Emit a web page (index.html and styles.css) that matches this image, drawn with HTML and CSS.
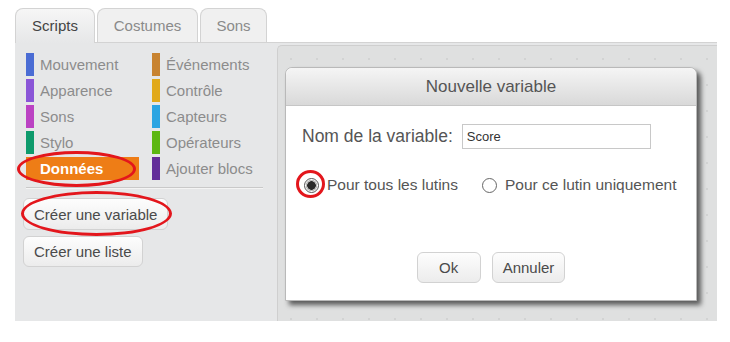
FILE: index.html
```html
<!DOCTYPE html>
<html lang="fr">
<head>
<meta charset="UTF-8">
<title>Nouvelle variable</title>
<link rel="stylesheet" href="styles.css">
</head>
<body>
<div class="editor">
    <div class="tabs">
        <div class="tab active">Scripts</div>
        <div class="tab tab-costumes">Costumes</div>
        <div class="tab tab-sons">Sons</div>
    </div>
    <div class="workspace">
        <div class="palette">
            <div class="categories">
                <div class="cat"><span class="bar motion"></span>Mouvement</div>
                <div class="cat"><span class="bar events"></span>Événements</div>
                <div class="cat"><span class="bar looks"></span>Apparence</div>
                <div class="cat"><span class="bar control"></span>Contrôle</div>
                <div class="cat"><span class="bar sound"></span>Sons</div>
                <div class="cat"><span class="bar sensing"></span>Capteurs</div>
                <div class="cat"><span class="bar pen"></span>Stylo</div>
                <div class="cat"><span class="bar operators"></span>Opérateurs</div>
                <div class="cat selected"><span class="bar data"></span>Données</div>
                <div class="cat"><span class="bar more"></span>Ajouter blocs</div>
            </div>
            <div class="sep"></div>
            <div class="actions">
                <button class="soft-btn">Créer une variable</button>
                <button class="soft-btn">Créer une liste</button>
            </div>
        </div>
        <div class="scripts">
            <div class="dialog">
                <div class="dialog-title">Nouvelle variable</div>
                <div class="dialog-body">
                    <div class="name-row">
                        <label for="varName">Nom de la variable:</label>
                        <input type="text" id="varName" value="Score">
                    </div>
                    <div class="radio-row">
                        <span class="radio-item"><span class="radio checked"></span>Pour tous les lutins</span>
                        <span class="radio-item"><span class="radio"></span>Pour ce lutin uniquement</span>
                    </div>
                    <div class="dialog-buttons">
                        <button class="soft-btn ok">Ok</button>
                        <button class="soft-btn">Annuler</button>
                    </div>
                </div>
            </div>
        </div>
    </div>
    <!-- annotations -->
    <div class="mark mark-data"></div>
    <div class="mark mark-var"></div>
    <div class="mark mark-radio"></div>
</div>
</body>
</html>
```

FILE: styles.css
```css
body {
    margin: 0;
    background: #fff;
    font-family: "Liberation Sans", Arial, sans-serif;
}
.editor {
    position: relative;
    width: 702px;
    margin: 8px 0 0 15px;
}
.tabs {
    display: flex;
    gap: 2px;
    height: 34px;
}
.tab {
    box-sizing: border-box;
    height: 34px;
    padding-top: 8px;
    text-align: center;
    font-size: 15px;
    color: #8a8a8a;
    background: #f0f0f0;
    border: 1px solid #d3d3d3;
    border-bottom: none;
    border-radius: 8px 8px 0 0;
}
.tab.active {
    width: 80px;
    color: #444;
    background: linear-gradient(#f6f6f6, #e6e7e8);
    position: relative;
    z-index: 1;
    height: 35px;
}
.tab-costumes { width: 101px; }
.tab-sons { width: 67px; }
.workspace {
    display: flex;
    height: 279px;
    background: #e6e7e8;
    border-top: 1px solid #d3d3d3;
    box-sizing: border-box;
}
.palette {
    width: 262px;
    padding: 10px 0 0 11px;
    box-sizing: border-box;
}
.categories {
    display: grid;
    grid-template-columns: 126px 114px;
    row-gap: 3px;
}
.cat {
    display: flex;
    align-items: center;
    height: 23px;
    font-size: 15px;
    color: #8c8c8c;
}
.bar {
    width: 8px;
    height: 23px;
    margin-right: 6px;
}
.motion { background: #4a6cd4; }
.looks { background: #8a55d7; }
.sound { background: #bb42c3; }
.pen { background: #0e9a6c; }
.data { background: #ee7d16; }
.events { background: #c88330; }
.control { background: #e1a91a; }
.sensing { background: #2ca5e2; }
.operators { background: #5cb712; }
.more { background: #632d99; }
.cat.selected {
    width: 113px;
    background: #ee7d16;
    color: #fff;
    font-weight: bold;
}
.sep {
    width: 237px;
    height: 1px;
    margin-top: 7px;
    background: #c9c9c9;
    border-bottom: 1px solid #f4f4f4;
}
.actions {
    display: flex;
    flex-direction: column;
    align-items: flex-start;
    gap: 6px;
    margin: 9px 0 0 -3px;
}
.soft-btn {
    height: 32px;
    padding: 0 10px;
    font-family: "Liberation Sans", Arial, sans-serif;
    font-size: 15px;
    color: #4a4a4a;
    background: linear-gradient(#fdfdfd, #ececec);
    border: 1px solid #d2d2d2;
    border-radius: 6px;
}
.actions .soft-btn + .soft-btn { height: 31px; }
.scripts {
    position: relative;
    flex: 1;
    margin-top: 2px;
    border-top: 1px solid #cfcfcf;
    border-left: 1px solid #cfcfcf;
    border-top-left-radius: 5px;
    background-color: #dfe0e0;
    background-image: radial-gradient(circle, #d2d3d3 1px, transparent 1.5px);
    background-size: 26px 26px;
}
.dialog {
    position: absolute;
    left: 7px;
    top: 21px;
    width: 412px;
    height: 234px;
    box-sizing: border-box;
    background: #fff;
    border: 1px solid #b9b9b9;
    border-radius: 7px 7px 0 0;
    box-shadow: 4px 4px 5px rgba(0, 0, 0, 0.6);
}
.dialog-title {
    height: 37px;
    line-height: 37px;
    text-align: center;
    font-size: 17px;
    color: #555;
    background: linear-gradient(#f5f5f5, #d9d9d9);
    border-bottom: 1px solid #c6c6c6;
    border-radius: 7px 7px 0 0;
}
.dialog-body {
    padding: 18px 0 0 16px;
}
.name-row {
    display: flex;
    align-items: center;
    gap: 9px;
}
.name-row label {
    font-size: 17.5px;
    color: #555;
}
.name-row input {
    width: 189px;
    height: 25px;
    box-sizing: border-box;
    padding: 0 4px;
    border: 1px solid #c8c8c8;
    font-family: "Liberation Sans", Arial, sans-serif;
    font-size: 13px;
    color: #333;
}
.radio-row {
    display: flex;
    gap: 22px;
    margin-top: 27px;
    font-size: 15.5px;
    color: #555;
}
.radio-item {
    display: flex;
    align-items: center;
    gap: 8px;
}
.radio {
    width: 15px;
    height: 15px;
    box-sizing: border-box;
    border: 1px solid #666;
    border-radius: 50%;
    background: #fff;
    margin-left: 2px;
}
.radio.checked {
    border-color: #555;
    background: radial-gradient(circle, #2a2a2a 4px, #bdbdbd 4.5px, #bdbdbd 5.5px, #fff 6px);
}
.dialog-buttons {
    display: flex;
    justify-content: center;
    gap: 11px;
    margin: 58px 0 0 -16px;
}
.dialog-buttons .soft-btn {
    height: 31px;
}
.dialog-buttons .ok {
    width: 64px;
}
.mark {
    position: absolute;
    border: 3px solid #e3161c;
    border-radius: 50%;
    box-sizing: border-box;
}
.mark-data {
    left: 2px;
    top: 143px;
    width: 119px;
    height: 36px;
}
.mark-var {
    left: 6px;
    top: 183px;
    width: 151px;
    height: 45px;
}
.mark-radio {
    left: 281px;
    top: 162px;
    width: 29px;
    height: 28px;
}
```
